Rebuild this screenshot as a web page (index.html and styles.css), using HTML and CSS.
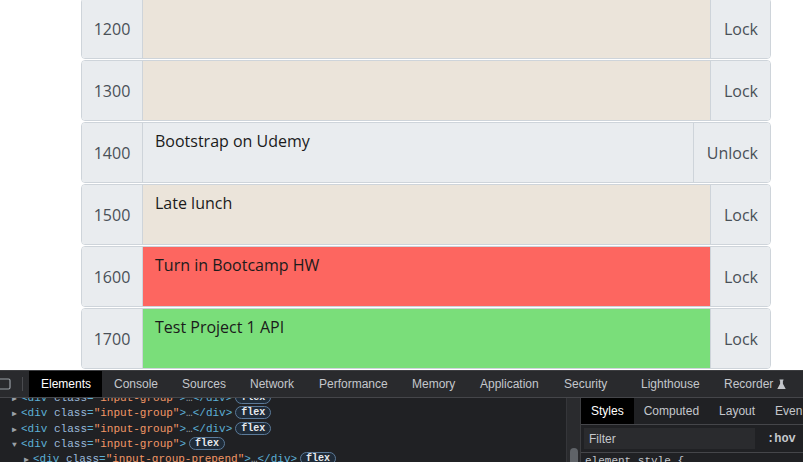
FILE: index.html
```html
<!DOCTYPE html>
<html>
<head>
<meta charset="utf-8">
<link rel="stylesheet" href="styles.css">
</head>
<body>
<main class="page">
  <div class="rows">
    <div class="row"><div class="hour">1200</div><div class="task past"></div><div class="btn">Lock</div></div>
    <div class="row"><div class="hour">1300</div><div class="task past"></div><div class="btn">Lock</div></div>
    <div class="row"><div class="hour">1400</div><div class="task locked">Bootstrap on Udemy</div><div class="btn">Unlock</div></div>
    <div class="row"><div class="hour">1500</div><div class="task past">Late lunch</div><div class="btn">Lock</div></div>
    <div class="row"><div class="hour">1600</div><div class="task present">Turn in Bootcamp HW</div><div class="btn">Lock</div></div>
    <div class="row"><div class="hour">1700</div><div class="task future">Test Project 1 API</div><div class="btn">Lock</div></div>
  </div>
</main>
<section class="devtools">
  <div class="tabbar">
    <div class="devicon"><svg width="12" height="14" viewBox="0 0 12 14"><rect x="-4" y="2" width="14" height="10" rx="1.5" fill="none" stroke="#9aa0a6" stroke-width="1.2"/></svg></div>
    <div class="sep"></div>
    <div class="tab t-elements active">Elements</div>
    <div class="tab t-console">Console</div>
    <div class="tab t-sources">Sources</div>
    <div class="tab t-network">Network</div>
    <div class="tab t-perf">Performance</div>
    <div class="tab t-memory">Memory</div>
    <div class="tab t-app">Application</div>
    <div class="tab t-security">Security</div>
    <div class="tab t-light">Lighthouse</div>
    <div class="tab">Recorder <svg class="flask" width="9" height="11" viewBox="0 0 9 11"><path d="M2.5 0.5h4v1h-0.6v3.2l2.8 5.3h-8.4l2.8-5.3v-3.2h-0.6z" fill="#c4c7cc"/></svg></div>
  </div>
  <div class="panes">
    <div class="elements">
      <div class="code">
        <div class="line"><span class="arr">▶</span><span class="tag">&lt;div</span> <span class="an">class</span><span class="tag">=</span><span class="av">"input-group"</span><span class="tag">&gt;</span>…<span class="tag">&lt;/div&gt;</span><span class="pill">flex</span></div>
        <div class="line"><span class="arr">▶</span><span class="tag">&lt;div</span> <span class="an">class</span><span class="tag">=</span><span class="av">"input-group"</span><span class="tag">&gt;</span>…<span class="tag">&lt;/div&gt;</span><span class="pill">flex</span></div>
        <div class="line"><span class="arr">▶</span><span class="tag">&lt;div</span> <span class="an">class</span><span class="tag">=</span><span class="av">"input-group"</span><span class="tag">&gt;</span>…<span class="tag">&lt;/div&gt;</span><span class="pill">flex</span></div>
        <div class="line"><span class="arr">▼</span><span class="tag">&lt;div</span> <span class="an">class</span><span class="tag">=</span><span class="av">"input-group"</span><span class="tag">&gt;</span><span class="pill">flex</span></div>
        <div class="line sub"><span class="arr">▶</span><span class="tag">&lt;div</span> <span class="an">class</span><span class="tag">=</span><span class="av">"input-group-prepend"</span><span class="tag">&gt;</span>…<span class="tag">&lt;/div&gt;</span><span class="pill">flex</span></div>
      </div>
      <div class="scroll"><div class="thumb"></div></div>
    </div>
    <div class="styles">
      <div class="subtabs">
        <div class="stab active">Styles</div>
        <div class="stab">Computed</div>
        <div class="stab">Layout</div>
        <div class="stab">Even</div>
      </div>
      <div class="filter">
        <div class="finput">Filter</div>
        <div class="hov">:hov</div>
      </div>
      <div class="rule">element.style {</div>
    </div>
  </div>
</section>
</body>
</html>
```
FILE: styles.css
```css
* { box-sizing: border-box; }
html, body { margin: 0; padding: 0; }
body {
  width: 803px;
  height: 462px;
  overflow: hidden;
  display: flex;
  flex-direction: column;
  background: #fff;
}
.page {
  flex: none;
  height: 370px;
  overflow: hidden;
  font-family: "Open Sans", sans-serif;
  font-size: 16px;
}
.rows {
  margin: -2px 0 0 81px;
  width: 690px;
  display: flex;
  flex-direction: column;
  gap: 1px;
}
.row {
  display: flex;
  flex: none;
  height: 61px;
  border: 1px solid #ced4da;
  border-radius: 4px;
  overflow: hidden;
}
.hour {
  width: 61px;
  flex: none;
  background: #e9ecef;
  color: #495057;
  display: flex;
  align-items: center;
  justify-content: center;
  border-right: 1px solid #ced4da;
}
.task {
  flex: 1;
  padding: 6px 12px;
  line-height: 24px;
  color: #1b1b1b;
}
.past { background: #ebe4da; }
.locked { background: #e9ecef; }
.present { background: #fd6660; }
.future { background: #7ade7a; }
.btn {
  flex: none;
  background: #e9ecef;
  color: #495057;
  border-left: 1px solid #ced4da;
  display: flex;
  align-items: center;
  padding: 0 12px 0 13px;
}
.devtools {
  flex: 1;
  min-height: 0;
  background: #202124;
  font-family: "Liberation Sans", Arial, sans-serif;
  font-size: 12px;
  color: #c4c7cc;
  display: flex;
  flex-direction: column;
  border-top: 1px solid #3c3d40;
}
.tabbar {
  flex: none;
  height: 27px;
  background: #292a2d;
  border-bottom: 1px solid #45464a;
  display: flex;
  align-items: stretch;
  white-space: nowrap;
  overflow: hidden;
}
.devicon { width: 14px; flex: none; display: flex; align-items: center; }
.sep { width: 1px; flex: none; background: #4a4b4f; margin: 6px 6px 6px 8px; }
.tab {
  flex: none;
  padding: 0 0 0 12px;
  display: flex;
  align-items: center;
}
.t-elements { width: 73px; }
.t-console { width: 68px; }
.t-sources { width: 68px; }
.t-network { width: 69px; }
.t-perf { width: 93px; }
.t-memory { width: 68px; }
.t-app { width: 84px; }
.t-security { width: 77px; }
.t-light { width: 83px; }
.tab.active { background: #000; color: #fff; }
.flask { margin-left: 4px; }
.panes { flex: 1; display: flex; overflow: hidden; min-height: 0; }
.elements { width: 581px; flex: none; display: flex; border-right: 1px solid #3c3d40; }
.code {
  flex: 1;
  font-family: "Liberation Mono", monospace;
  font-size: 11px;
  color: #9aa0a6;
  margin-top: -7px;
  overflow: hidden;
}
.line { height: 15.3px; line-height: 15.3px; padding-left: 12px; white-space: pre; }
.line.sub { padding-left: 24px; }
.arr { display: inline-block; font-size: 8px; color: #9aa0a6; width: 9px; vertical-align: top; }
.tag { color: #5db0d7; }
.an { color: #9bbbdc; }
.av { color: #f29766; }
.pill {
  display: inline-block;
  font-size: 10px;
  color: #e8eaed;
  border: 1px solid #5b7a99;
  background: #1f2b38;
  border-radius: 8px;
  padding: 0 5px;
  margin-left: 3px;
  line-height: 11px;
  font-weight: bold;
  vertical-align: 1px;
}
.scroll { width: 14px; flex: none; background: #2a2b2e; border-left: 1px solid #35363a; position: relative; }
.thumb { position: absolute; left: 3px; top: 50px; width: 8px; height: 30px; border-radius: 4px; background: #5f6368; }
.styles { flex: 1; min-width: 0; overflow: hidden; display: flex; flex-direction: column; }
.subtabs { flex: none; height: 27px; display: flex; border-bottom: 1px solid #45464a; white-space: nowrap; }
.stab { flex: none; padding: 0 10px; display: flex; align-items: center; }
.stab.active { background: #000; color: #fff; }
.filter { flex: none; height: 28px; display: flex; align-items: center; padding: 0 3px; border-bottom: 1px solid #45464a; }
.finput { width: 171px; height: 21px; background: #2a2b2e; padding-left: 5px; display: flex; align-items: center; }
.hov { margin-left: 12px; font-weight: bold; font-family: "Liberation Mono", monospace; font-size: 12px; }
.rule { font-family: "Liberation Mono", monospace; font-size: 11px; padding: 2px 0 0 4px; white-space: pre; }
```
